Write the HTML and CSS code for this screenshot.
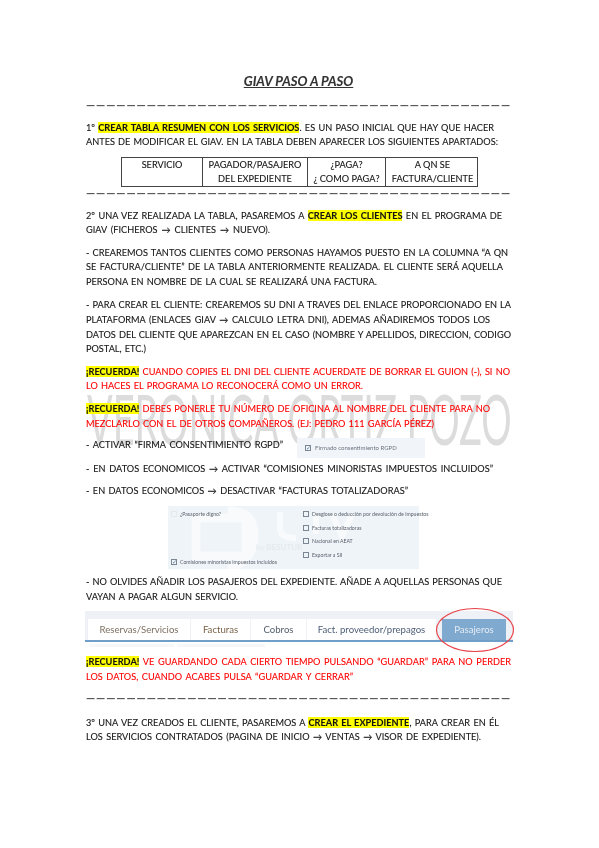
FILE: index.html
```html
<!DOCTYPE html>
<html lang="es">
<head>
<meta charset="utf-8">
<title>GIAV paso a paso</title>
<link rel="stylesheet" href="styles.css">
</head>
<body>
<main class="page">
  <div class="watermark" aria-hidden="true">VERONICA ORTIZ POZO</div>
  <h1 class="title">GIAV PASO A PASO</h1>
  <div class="rule rule-a">__________________________________________</div>

  <div class="para p1">
    <div class="line w408">1º <mark>CREAR TABLA RESUMEN CON LOS SERVICIOS</mark>. ES UN PASO INICIAL QUE HAY QUE HACER</div>
    <div class="line w412">ANTES DE MODIFICAR EL GIAV. EN LA TABLA DEBEN APARECER LOS SIGUIENTES APARTADOS:</div>
  </div>

  <div class="table">
    <div class="cell c1">SERVICIO</div>
    <div class="cell c2">PAGADOR/PASAJERO<br>DEL EXPEDIENTE</div>
    <div class="cell c3">¿PAGA?<br>¿ COMO PAGA?</div>
    <div class="cell c4">A QN SE<br>FACTURA/CLIENTE</div>
  </div>
  <div class="rule rule-b">__________________________________________</div>

  <div class="para p2">
    <div class="line w416">2º UNA VEZ REALIZADA LA TABLA, PASAREMOS A <mark>CREAR LOS CLIENTES</mark> EN EL PROGRAMA DE</div>
    <div class="line w184">GIAV (FICHEROS → CLIENTES → NUEVO).</div>
  </div>
  <div class="para">
    <div class="line w422">- CREAREMOS TANTOS CLIENTES COMO PERSONAS HAYAMOS PUESTO EN LA COLUMNA “A QN</div>
    <div class="line w417">SE FACTURA/CLIENTE” DE LA TABLA ANTERIORMENTE REALIZADA. EL CLIENTE SERÁ AQUELLA</div>
    <div class="line w291">PERSONA EN NOMBRE DE LA CUAL SE REALIZARÁ UNA FACTURA.</div>
  </div>
  <div class="para p4">
    <div class="line w425">- PARA CREAR EL CLIENTE: CREAREMOS SU DNI A TRAVES DEL ENLACE PROPORCIONADO EN LA</div>
    <div class="line w404">PLATAFORMA (ENLACES GIAV → CALCULO LETRA DNI), ADEMAS AÑADIREMOS TODOS LOS</div>
    <div class="line w425">DATOS DEL CLIENTE QUE APAREZCAN EN EL CASO (NOMBRE Y APELLIDOS, DIRECCION, CODIGO</div>
    <div class="line w60">POSTAL, ETC.)</div>
  </div>
  <div class="para red p5">
    <div class="line w424"><mark>¡RECUERDA!</mark> CUANDO COPIES EL DNI DEL CLIENTE ACUERDATE DE BORRAR EL GUION (-), SI NO</div>
    <div class="line w277">LO HACES EL PROGRAMA LO RECONOCERÁ COMO UN ERROR.</div>
  </div>
  <div class="para red p6">
    <div class="line w404"><mark>¡RECUERDA!</mark> DEBES PONERLE TU NÚMERO DE OFICINA AL NOMBRE DEL CLIENTE PARA NO</div>
    <div class="line w348">MEZCLARLO CON EL DE OTROS COMPAÑEROS. (EJ: PEDRO 111 GARCÍA PÉREZ)</div>
  </div>
  <div class="consent-row">
    <div class="line w197">- ACTIVAR “FIRMA CONSENTIMIENTO RGPD”</div>
    <div class="consent">
      <span class="box checked">✓</span>
      <span class="shot-text">Firmado consentimiento RGPD</span>
    </div>
  </div>
  <div class="para p8">
    <div class="line w407">- EN DATOS ECONOMICOS → ACTIVAR “COMISIONES MINORISTAS IMPUESTOS INCLUIDOS”</div>
  </div>
  <div class="para">
    <div class="line w322">- EN DATOS ECONOMICOS → DESACTIVAR “FACTURAS TOTALIZADORAS”</div>
  </div>

  <div class="options">
    <svg class="logo" viewBox="0 0 251 63" aria-hidden="true">
      <path d="M28 12h50v38H28zM60 5c18 0 26 8 26 24s-6 28-26 34" fill="none" stroke="#f8fafc" stroke-width="9"/>
      <path d="M112 6v16c0 8 8 10 16 10M148 8v20M164 8l10 22 10-22" fill="none" stroke="#f8fafc" stroke-width="6"/>
    </svg>
    <div class="opt-left">
      <div class="opt"><span class="box blank"></span><span class="shot-text">¿Pasaporte digno?</span></div>
      <div class="opt"><span class="box checked">✓</span><span class="shot-text">Comisiones minoristas impuestos incluidos</span></div>
    </div>
    <div class="opt-right">
      <div class="opt"><span class="box"></span><span class="shot-text">Desglose o deducción por devolución de impuestos</span></div>
      <div class="opt"><span class="box"></span><span class="shot-text">Facturas totalizadoras</span></div>
      <div class="opt"><span class="box"></span><span class="shot-text">Nacional en AEAT</span></div>
      <div class="opt"><span class="box"></span><span class="shot-text">Exportar a SII</span></div>
    </div>
    <div class="by">by <b>BESUTUR</b></div>
  </div>

  <div class="para p10">
    <div class="line w416">- NO OLVIDES AÑADIR LOS PASAJEROS DEL EXPEDIENTE. AÑADE A AQUELLAS PERSONAS QUE</div>
    <div class="line w152">VAYAN A PAGAR ALGUN SERVICIO.</div>
  </div>

  <div class="tabs-shot">
    <div class="tabs">
      <div class="tab t1">Reservas/Servicios</div>
      <div class="tab t2">Facturas</div>
      <div class="tab t3">Cobros</div>
      <div class="tab t4">Fact. proveedor/prepagos</div>
      <div class="tab active">Pasajeros</div>
    </div>
    <div class="subtabs"><span class="sub s1"></span><span class="sub s2"></span></div>
    <svg class="circle" viewBox="0 0 80 46" aria-hidden="true">
      <ellipse cx="40" cy="23" rx="38.5" ry="21.5" fill="none" stroke="#e8434a" stroke-width="1.2"/>
    </svg>
  </div>

  <div class="para red p11">
    <div class="line w425"><mark>¡RECUERDA!</mark> VE GUARDANDO CADA CIERTO TIEMPO PULSANDO “GUARDAR” PARA NO PERDER</div>
    <div class="line w267">LOS DATOS, CUANDO ACABES PULSA “GUARDAR Y CERRAR”</div>
  </div>
  <div class="rule rule-c">__________________________________________</div>
  <div class="para p12">
    <div class="line w413">3º UNA VEZ CREADOS EL CLIENTE, PASAREMOS A <mark>CREAR EL EXPEDIENTE</mark>, PARA CREAR EN ÉL</div>
    <div class="line w395">LOS SERVICIOS CONTRATADOS (PAGINA DE INICIO → VENTAS → VISOR DE EXPEDIENTE).</div>
  </div>
</main>
</body>
</html>
```
FILE: styles.css
```css
* { box-sizing: border-box; }
html, body { margin: 0; background: #fff; }
body { width: 599px; height: 848px; overflow: hidden; }

.page {
  position: relative;
  height: 848px;
  padding: 73px 0 0 86px;
  font-family: Lato, "Open Sans", sans-serif;
  font-size: 9.2px;
  line-height: 14.8px;
  color: #141414;
  -webkit-text-stroke: 0.1px currentColor;
  filter: blur(0.3px);
}
.title {
  margin: 0;
  width: 425px;
  height: 16px;
  font-size: 13.2px;
  line-height: 16px;
  font-weight: 700;
  font-style: italic;
  text-align: center;
  text-decoration: underline;
  color: #333;
}
.rule {
  width: 425px;
  height: 13.6px;
  white-space: nowrap;
  font-size: 20px;
  letter-spacing: 0.94px;
  line-height: 0;
  color: #5a5a5a;
  -webkit-text-stroke: 0;
}
.rule-a { margin-top: 6.4px; }
.rule-b { margin-top: -3.6px; }
.rule-c { margin-top: 3.4px; }

.para { margin-top: 7.4px; position: relative; }
.p1 { margin-top: 11.6px; }
.p2 { margin-top: 11.6px; }
.p4 { margin-top: 8px; }
.p5 { margin-top: 7.4px; }
.p6 { margin-top: 8.2px; }
.p8 { margin-top: 4px; }
.p10 { margin-top: 6.6px; }
.p11 { margin-top: 8.1px; }
.p12 { margin-top: 14px; }
.red { color: #ff0000; }
mark { background: #ffff00; color: #141414; font-weight: 700; }
.red mark { font-weight: 700; }

.line { text-align: justify; text-align-last: justify; }
.w60 { width: 60px; } .w152 { width: 152px; } .w184 { width: 184px; }
.w197 { width: 197px; } .w267 { width: 267px; } .w277 { width: 277px; }
.w291 { width: 291px; } .w322 { width: 322px; } .w348 { width: 348px; }
.w395 { width: 395px; } .w404 { width: 404px; } .w407 { width: 407px; }
.w408 { width: 408px; } .w412 { width: 412px; } .w413 { width: 413px; }
.w416 { width: 416px; } .w417 { width: 417px; } .w422 { width: 422px; }
.w424 { width: 424px; } .w425 { width: 425px; }

.table {
  display: grid;
  grid-template-columns: 80px 105px 78px 94px;
  width: 357px;
  height: 30px;
  margin: 6.8px 0 0 35px;
  border: 1px solid #444;
  line-height: 13.6px;
  text-align: center;
}
.cell { border-left: 1px solid #444; white-space: nowrap; }
.c1 { border-left: 0; }

.watermark {
  position: absolute;
  left: 87px;
  top: 379px;
  width: 850px;
  font-size: 69px;
  line-height: 80px;
  font-weight: 400;
  white-space: nowrap;
  color: #dcdcdc;
  -webkit-text-stroke: 0;
  transform-origin: 0 0;
  transform: scaleX(0.55);
  z-index: -1;
}

.consent-row {
  display: flex;
  align-items: flex-start;
  height: 20px;
  margin-top: 6.4px;
}
.consent {
  display: flex;
  align-items: center;
  gap: 4px;
  width: 128px;
  height: 20px;
  margin-left: 14px;
  padding-left: 8px;
  background: #f1f5f9;
}
.box {
  display: inline-block;
  width: 6px;
  height: 6px;
  border: 1px solid #7c8794;
  font-size: 6px;
  line-height: 4px;
  color: #5b78a0;
  flex: none;
  -webkit-text-stroke: 0;
}
.box.blank { border-color: #e6e9ec; }
.shot-text { font-size: 6px; line-height: 8px; color: #6c7480; white-space: nowrap; filter: blur(0.5px); -webkit-text-stroke: 0; }

.options {
  position: relative;
  display: flex;
  justify-content: space-between;
  width: 251px;
  height: 63px;
  margin: 6.6px 0 0 82px;
  padding: 5px 0 3px 3px;
  background: #eff4f8;
}
.logo { position: absolute; inset: 0; width: 251px; height: 63px; }
.opt-left { position: relative; display: flex; flex-direction: column; justify-content: space-between; width: 128px; }
.opt-right { position: relative; display: flex; flex-direction: column; gap: 6.4px; width: 116px; }
.opt { display: flex; align-items: center; gap: 3px; height: 7px; }
.opt .shot-text { font-size: 5.2px; color: #59616c; }
.by {
  position: absolute;
  left: 88px;
  top: 36px;
  font-size: 8px;
  line-height: 10px;
  color: #e4e9ee;
  -webkit-text-stroke: 0;
}

.tabs-shot {
  position: relative;
  width: 428px;
  height: 36px;
  margin: 5.8px 0 0 -1px;
  background: linear-gradient(#eef2f6 0, #eef2f6 29px, #fff 31px);
}
.tabs {
  display: flex;
  align-items: flex-end;
  gap: 1px;
  height: 31px;
  padding: 8px 0 0 3px;
  border-bottom: 2px solid #6f9fc8;
}
.tab {
  height: 21px;
  background: #fff;
  font-size: 9.6px;
  line-height: 21px;
  text-align: center;
  color: #5f5a58;
  white-space: nowrap;
  filter: blur(0.45px);
  -webkit-text-stroke: 0;
}
.t1 { width: 102px; color: #7d6f60; }
.t2 { width: 59px; color: #7a6248; }
.t3 { width: 55px; color: #55606c; }
.t4 { width: 129px; color: #4f6078; }
.active { width: 64px; margin-left: 5px; background: #7fa9cf; color: #e6edf4; }
.subtabs { display: flex; gap: 3px; padding-left: 4px; }
.sub { height: 3px; background: #f6f7f8; margin-top: 2px; }
.s1 { width: 85px; }
.s2 { width: 88px; }
.circle {
  position: absolute;
  left: 350px;
  top: -4px;
  width: 80px;
  height: 46px;
}
```
